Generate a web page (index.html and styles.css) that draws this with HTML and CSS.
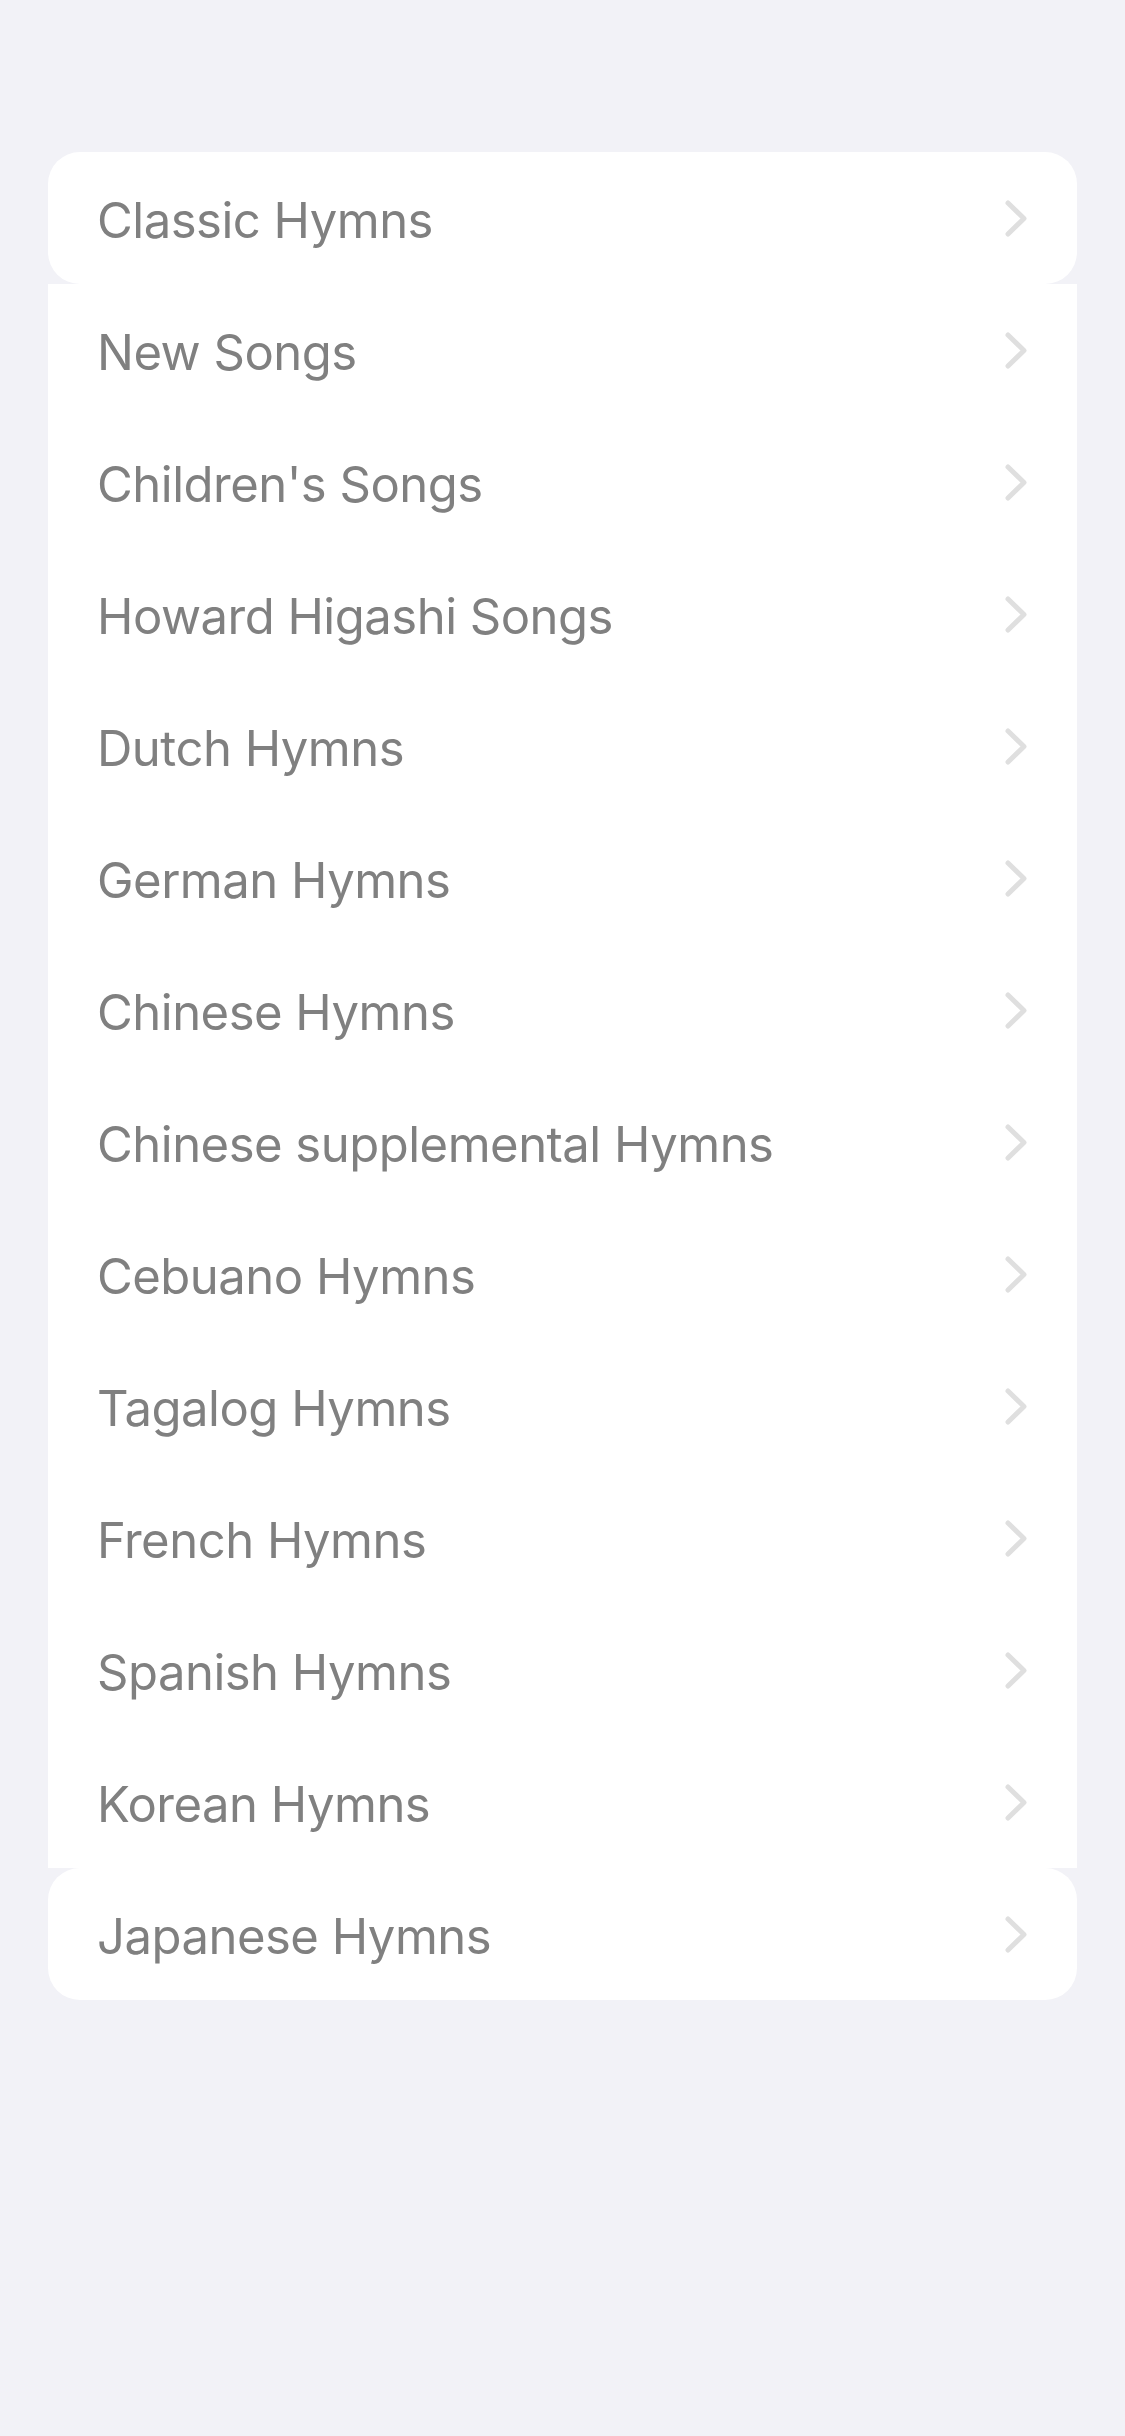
FILE: index.html
```html
<!DOCTYPE html>
<html>
<head>
<meta charset="utf-8">
<link rel="stylesheet" href="styles.css">
</head>
<body>
<div class="page">
  <ul class="list">
    <li class="row row-first"><span class="label">Classic Hymns</span><svg class="chev" viewBox="0 0 22 37"><path d="M3 3 L19 18.5 L3 34"/></svg></li>
    <li class="row"><span class="label">New Songs</span><svg class="chev" viewBox="0 0 22 37"><path d="M3 3 L19 18.5 L3 34"/></svg></li>
    <li class="row"><span class="label">Children's Songs</span><svg class="chev" viewBox="0 0 22 37"><path d="M3 3 L19 18.5 L3 34"/></svg></li>
    <li class="row"><span class="label">Howard Higashi Songs</span><svg class="chev" viewBox="0 0 22 37"><path d="M3 3 L19 18.5 L3 34"/></svg></li>
    <li class="row"><span class="label">Dutch Hymns</span><svg class="chev" viewBox="0 0 22 37"><path d="M3 3 L19 18.5 L3 34"/></svg></li>
    <li class="row"><span class="label">German Hymns</span><svg class="chev" viewBox="0 0 22 37"><path d="M3 3 L19 18.5 L3 34"/></svg></li>
    <li class="row"><span class="label">Chinese Hymns</span><svg class="chev" viewBox="0 0 22 37"><path d="M3 3 L19 18.5 L3 34"/></svg></li>
    <li class="row"><span class="label">Chinese supplemental Hymns</span><svg class="chev" viewBox="0 0 22 37"><path d="M3 3 L19 18.5 L3 34"/></svg></li>
    <li class="row"><span class="label">Cebuano Hymns</span><svg class="chev" viewBox="0 0 22 37"><path d="M3 3 L19 18.5 L3 34"/></svg></li>
    <li class="row"><span class="label">Tagalog Hymns</span><svg class="chev" viewBox="0 0 22 37"><path d="M3 3 L19 18.5 L3 34"/></svg></li>
    <li class="row"><span class="label">French Hymns</span><svg class="chev" viewBox="0 0 22 37"><path d="M3 3 L19 18.5 L3 34"/></svg></li>
    <li class="row"><span class="label">Spanish Hymns</span><svg class="chev" viewBox="0 0 22 37"><path d="M3 3 L19 18.5 L3 34"/></svg></li>
    <li class="row"><span class="label">Korean Hymns</span><svg class="chev" viewBox="0 0 22 37"><path d="M3 3 L19 18.5 L3 34"/></svg></li>
    <li class="row row-last"><span class="label">Japanese Hymns</span><svg class="chev" viewBox="0 0 22 37"><path d="M3 3 L19 18.5 L3 34"/></svg></li>
  </ul>
</div>
</body>
</html>
```

FILE: styles.css
```css
html, body {
  margin: 0;
  padding: 0;
  background: #f2f2f7;
}
body {
  font-family: Inter, "Noto Sans", "Liberation Sans", sans-serif;
  width: 1125px;
  min-height: 2436px;
}
.page {
  padding: 152px 48px 0 48px;
}
.list {
  list-style: none;
  margin: 0;
  padding: 0;
}
.row {
  height: 132px;
  background: #ffffff;
  display: flex;
  align-items: center;
  justify-content: space-between;
  padding: 0 50px 0 49px;
}
.row-first, .row-last {
  border-radius: 32px;
}
.label {
  font-size: 49px;
  color: #808080;
  letter-spacing: -0.5px;
  line-height: 1;
  padding-top: 4px;
}
.chev {
  width: 22px;
  height: 37px;
  fill: none;
  stroke: #dfdfdf;
  stroke-width: 5;
  stroke-linecap: round;
  stroke-linejoin: round;
}
```
